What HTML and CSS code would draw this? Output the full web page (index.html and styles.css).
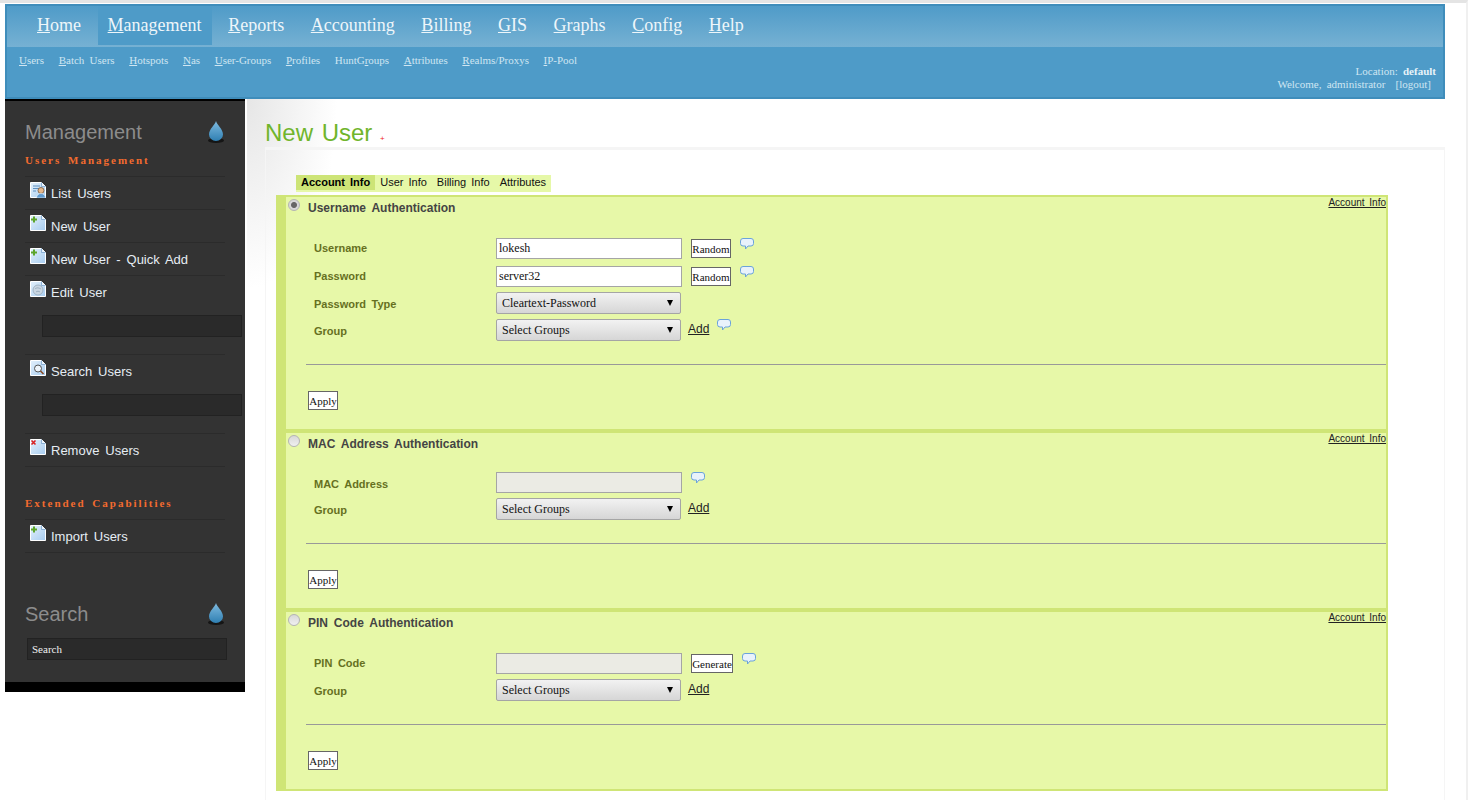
FILE: index.html
```html
<!DOCTYPE html>
<html lang="en">
<head>
<meta charset="utf-8">
<title>New User</title>
<link rel="stylesheet" href="styles.css">
</head>
<body>
<svg class="defs" width="0" height="0" aria-hidden="true">
  <defs>
    <linearGradient id="pg" x1="0" y1="0" x2="1" y2="1"><stop offset="0" stop-color="#e3f0fb"/><stop offset="1" stop-color="#a8cdf0"/></linearGradient>
    <linearGradient id="dp" x1="0" y1="0" x2="0" y2="1"><stop offset="0" stop-color="#7fbbe0"/><stop offset="1" stop-color="#2f7fb2"/></linearGradient>
    <symbol id="page" viewBox="0 0 16 16"><path d="M.5.5h11l4 4v11H.5z" fill="url(#pg)" stroke="#fff"/><path d="M11.500.5v4h4" fill="#e8f2fb" stroke="#5c8fc0" stroke-width=".6"/></symbol>
    <symbol id="bubble" viewBox="0 0 14 12"><path d="M3 .5h8a2.500 2.500 0 0 1 2.500 2.500v2.500a2.500 2.500 0 0 1-2.500 2.500H8l-2.500 3v-3H3A2.500 2.500 0 0 1 .5 5.500V3A2.500 2.500 0 0 1 3 .5z" fill="#e9f2fb" stroke="#6ba3da"/></symbol>
    <symbol id="drop" viewBox="0 0 16 22"><ellipse cx="8" cy="19.500" rx="8" ry="2.500" fill="#151515"/><path d="M8 0c1 4 7 8 7 13.500a7 6.500 0 0 1-14 0C1 8 7 4 8 0z" fill="url(#dp)"/></symbol>
  </defs>
</svg>
<div class="page">
  <header class="top">
    <nav class="mainnav">
      <a href="#"><u>H</u>ome</a>
      <a href="#" class="on"><u>M</u>anagement</a>
      <a href="#"><u>R</u>eports</a>
      <a href="#"><u>A</u>ccounting</a>
      <a href="#"><u>B</u>illing</a>
      <a href="#"><u>G</u>IS</a>
      <a href="#"><u>G</u>raphs</a>
      <a href="#"><u>C</u>onfig</a>
      <a href="#"><u>H</u>elp</a>
    </nav>
    <div class="subbar">
      <nav class="subnav">
        <a href="#"><u>U</u>sers</a>
        <a href="#"><u>B</u>atch Users</a>
        <a href="#"><u>H</u>otspots</a>
        <a href="#"><u>N</u>as</a>
        <a href="#"><u>U</u>ser-Groups</a>
        <a href="#"><u>P</u>rofiles</a>
        <a href="#">HuntG<u>r</u>oups</a>
        <a href="#"><u>A</u>ttributes</a>
        <a href="#"><u>R</u>ealms/Proxys</a>
        <a href="#"><u>I</u>P-Pool</a>
      </nav>
      <div class="status">
        <div>Location: <b>default</b></div>
        <div class="welcome">Welcome, administrator <span class="logout">[logout]</span></div>
      </div>
    </div>
  </header>
  <div class="body">
    <aside class="side">
      <h2 class="side-title">Management <svg class="drop"><use href="#drop"/></svg></h2>
      <h3 class="side-sub">Users Management</h3>
      <ul class="side-list">
        <li><a href="#">
          <svg class="ico" viewBox="0 0 16 16"><use href="#page"/><path d="M3 4h7M3 6.500h6M3 9h3" stroke="#5c8fc0"/><circle cx="11" cy="8.500" r="3" fill="#e6b88c" stroke="#6b4a2e" stroke-width=".7"/><path d="M6.500 16c0-3 2-4.500 4.500-4.500s4.500 1.500 4.500 4.500z" fill="#5f9bd0" stroke="#fff" stroke-width=".6"/></svg>
          List Users</a></li>
        <li><a href="#">
          <svg class="ico" viewBox="0 0 16 16"><use href="#page"/><path d="M1 4.500h6M4 1.500v6" stroke="#5da52a" stroke-width="2"/></svg>
          New User</a></li>
        <li><a href="#">
          <svg class="ico" viewBox="0 0 16 16"><use href="#page"/><path d="M1 4.500h6M4 1.500v6" stroke="#5da52a" stroke-width="2"/></svg>
          New User - Quick Add</a></li>
        <li><a href="#">
          <svg class="ico" viewBox="0 0 16 16"><use href="#page"/><circle cx="8" cy="9" r="5" fill="#c9d6e2" stroke="#8fa3b5" stroke-width=".7"/><path d="M5 8c2-2 4-1 6 0M6 11c1-1 3-1 4 0" stroke="#8fa3b5" fill="none" stroke-width=".8"/></svg>
          Edit User</a><input class="side-input" type="text"></li>
        <li><a href="#">
          <svg class="ico" viewBox="0 0 16 16"><use href="#page"/><circle cx="8" cy="8.500" r="3.500" fill="#eef5fb" stroke="#555"/><path d="M10.500 11l3 3" stroke="#8a4a22" stroke-width="1.600"/></svg>
          Search Users</a><input class="side-input" type="text"></li>
        <li><a href="#">
          <svg class="ico" viewBox="0 0 16 16"><use href="#page"/><path d="M1.500 1.500l4 4M5.500 1.500l-4 4" stroke="#d92020" stroke-width="1.600"/></svg>
          Remove Users</a></li>
      </ul>
      <h3 class="side-sub side-sub-next">Extended Capabilities</h3>
      <ul class="side-list">
        <li><a href="#">
          <svg class="ico" viewBox="0 0 16 16"><use href="#page"/><path d="M1 4.500h6M4 1.500v6" stroke="#5da52a" stroke-width="2"/></svg>
          Import Users</a></li>
      </ul>
      <h2 class="side-title side-title-next">Search <svg class="drop"><use href="#drop"/></svg></h2>
      <input class="side-search" type="text" value="Search">
    </aside>
    <main class="content">
      <h1 class="title">New User <span class="plus">+</span></h1>
      <div class="card">
        <div class="tabs">
          <a href="#" class="tab tab-on">Account Info</a>
          <a href="#" class="tab">User Info</a>
          <a href="#" class="tab">Billing Info</a>
          <a href="#" class="tab">Attributes</a>
        </div>

        <section class="panel">
          <div class="head">
            <input class="radio" type="radio" name="auth" checked>
            <span class="head-title">Username Authentication</span>
            <a href="#" class="toplink">Account Info</a>
          </div>
          <div class="fields">
            <label class="lab">Username</label>
            <div class="ctl"><input class="txt" type="text" value="lokesh"><button class="btn">Random</button><svg class="tip"><use href="#bubble"/></svg></div>
            <label class="lab row-gap">Password</label>
            <div class="ctl row-gap"><input class="txt" type="text" value="server32"><button class="btn">Random</button><svg class="tip"><use href="#bubble"/></svg></div>
            <label class="lab lab-sel">Password Type</label>
            <div class="ctl"><span class="selwrap"><select class="sel"><option>Cleartext-Password</option></select></span></div>
            <label class="lab lab-sel">Group</label>
            <div class="ctl"><span class="selwrap"><select class="sel"><option>Select Groups</option></select></span><a href="#" class="add">Add</a><svg class="tip tip-add"><use href="#bubble"/></svg></div>
          </div>
          <hr class="rule">
          <button class="btn btn-apply">Apply</button>
        </section>

        <section class="panel panel-mac">
          <div class="head">
            <input class="radio" type="radio" name="auth">
            <span class="head-title">MAC Address Authentication</span>
            <a href="#" class="toplink">Account Info</a>
          </div>
          <div class="fields">
            <label class="lab lab-sel">MAC Address</label>
            <div class="ctl"><input class="txt" type="text" disabled><svg class="tip"><use href="#bubble"/></svg></div>
            <label class="lab lab-sel">Group</label>
            <div class="ctl"><span class="selwrap"><select class="sel"><option>Select Groups</option></select></span><a href="#" class="add">Add</a></div>
          </div>
          <hr class="rule">
          <button class="btn btn-apply">Apply</button>
        </section>

        <section class="panel">
          <div class="head">
            <input class="radio" type="radio" name="auth">
            <span class="head-title">PIN Code Authentication</span>
            <a href="#" class="toplink">Account Info</a>
          </div>
          <div class="fields">
            <label class="lab">PIN Code</label>
            <div class="ctl"><input class="txt" type="text" disabled><button class="btn btn-gen">Generate</button><svg class="tip"><use href="#bubble"/></svg></div>
            <label class="lab lab-sel">Group</label>
            <div class="ctl"><span class="selwrap"><select class="sel"><option>Select Groups</option></select></span><a href="#" class="add">Add</a></div>
          </div>
          <hr class="rule">
          <button class="btn btn-apply">Apply</button>
        </section>
      </div>
    </main>
  </div>
</div>
</body>
</html>
```
FILE: styles.css
```css
* { box-sizing: border-box; }
html, body { margin: 0; padding: 0; background: #fff; }
body { font-family: "Liberation Sans", Arial, sans-serif; word-spacing: 2.500px; color: #222; }
.defs { display: block; }
.page { height: 800px; overflow: hidden; border-top: 3px solid #e4e4e4; border-right: 2px solid #f0f0f0; padding: 1px 0 0 5px; }

/* header */
.top { width: 1440px; height: 95px; border: 2px solid #3f8dbb; background: #4e9bc8; }
.mainnav { height: 41px; display: flex; padding-left: 20px; background: linear-gradient(#4f9bc8, #76b1d3); }
.mainnav a { height: 39px; padding: 0 10px; margin-right: 6.600px; font: 18px/39px "Liberation Serif", serif; color: #eef6fa; text-decoration: none; }
.mainnav a.on { background: #4e9bc8; }
.subbar { height: 50px; }
.subnav { display: flex; gap: 14.600px; padding: 6px 0 0 12px; height: 18px; }
.subnav a, .status { font: 11px/14px "Liberation Serif", serif; color: #cfe6f2; text-decoration: none; }
.status { padding-right: 7px; text-align: right; line-height: 13px; }
.welcome { padding-right: 5px; }
.logout { margin-left: 5px; }
.status b { color: #e8f3f9; }

/* layout */
.body { display: flex; align-items: flex-start; }

/* sidebar */
.side { width: 240px; height: 593px; flex: none; padding: 19px 20px 0; background: #333; border-top: 2px solid #000; border-bottom: 10px solid #000; }
.side-title { margin: 0; display: flex; justify-content: space-between; font: 20px/24px "Liberation Sans", sans-serif; color: #8c8c8c; word-spacing: 0; }
.side-title-next { margin-top: 49px; }
.drop { width: 16px; height: 22px; margin: 1px 1px 0 0; }
.side-sub { margin: 9px 0; font: bold 11px/14px "Liberation Serif", serif; letter-spacing: 2px; word-spacing: 2px; color: #f26b2f; }
.side-sub-next { margin-top: 29px; }
.side-list { list-style: none; margin: 0; padding: 0; border-top: 1px solid #2b2b2b; }
.side-list li { border-bottom: 1px solid #2b2b2b; }
.side-list a { display: flex; height: 32px; padding-left: 5px; gap: 5px; font-size: 13px; line-height: 34px; word-spacing: 2.300px; color: #e6edf4; text-decoration: none; }
.ico { width: 16px; height: 16px; margin-top: 5px; flex: none; }
.side-input { display: block; width: 200px; height: 22px; margin: 7px 0 17px 17px; background: #2a2a2a; border: 1px solid #222; }
.side-search { display: block; width: 200px; height: 22px; margin: 12px 0 0 2px; padding: 0 4px; background: #2a2a2a; border: 1px solid #222; color: #f0f0f0; font: 11px "Liberation Serif", serif; }

/* content */
.content { width: 1198px; height: 698px; margin-left: 2px; padding: 20px 0 0 18px; background: radial-gradient(ellipse 90px 190px at 0 0, #e6e6e6, #fff); }
.title { margin: 0; height: 28px; font: normal 24px/28px "Liberation Sans", sans-serif; word-spacing: 2px; color: #70b52c; }
.plus { font-size: 8px; line-height: 0; color: #f02020; margin-left: -1px; }
.card { width: 1180px; height: 660px; border: solid #f5f5f5; border-width: 3px 1px 0; padding: 25px 0 0 10px; }
.tabs { display: flex; width: 255px; height: 17px; margin: 0 0 3px 20px; background: #e6f8a8; align-items: flex-start; }
.tab { flex: none; white-space: nowrap; height: 15px; padding: 0 5px; font-size: 11px; line-height: 14px; word-spacing: 2px; color: #111; text-decoration: none; }
.tab-on { background: #cde477; font-weight: bold; color: #000; }

.panel { width: 1112px; padding-bottom: 19px; background: #e7f8a8; border: solid #cfe576; border-width: 2px 2px 2px 10px; }
.head { display: flex; height: 20px; }
.radio { appearance: none; width: 12px; height: 12px; margin: 2px 8px 0 2px; border-radius: 50%; border: 1px solid #b4b4b4; background: linear-gradient(#d8d8d8, #f0f0f0); flex: none; }
.radio:checked { background: radial-gradient(circle, #666 0 2.500px, #d8d8d8 3.500px); }
.head-title { font-size: 12px; font-weight: bold; line-height: 22px; color: #444; }
.toplink { margin-left: auto; font-size: 10px; line-height: 11px; word-spacing: 2px; color: #222; }

.fields { display: grid; grid-template-columns: 182px 1fr; row-gap: 5px; margin: 21px 0 0 28px; }
.panel-mac .fields { margin-top: 19px; }
.row-gap { margin-top: 2px; }
.lab { font-size: 11px; font-weight: bold; color: #66701f; line-height: 21px; }
.lab-sel { height: 21px; padding-top: 2px; line-height: 20px; }
.ctl { display: flex; align-items: flex-start; min-height: 21px; }
.txt { width: 186px; height: 21px; padding: 0 2px; border: 1px solid #a5a5a5; background: #fff; font: 12px "Liberation Serif", serif; color: #111; }
.txt:disabled { background: #ebebe4; }
.btn { height: 19px; margin: 1px 0 0 9px; padding: 1px 0 0; width: 40px; border: 1px solid #666; background: #fff; font: 11px/16px "Liberation Serif", serif; color: #111; }
.btn-gen { width: 42px; }
.tip { width: 14px; height: 12px; margin-left: 9px; flex: none; }
.tip-add { margin-left: 8px; }
.selwrap { position: relative; display: block; width: 185px; height: 22px; }
.selwrap::after { content: ""; position: absolute; right: 8px; top: 8px; border: solid transparent; border-width: 6px 3px 0; border-top-color: #000; }
.sel { appearance: none; display: block; width: 185px; height: 22px; padding: 0 5px; border: 1px solid #a5a5a5; border-radius: 2px; background: linear-gradient(#f2f2f2, #d6d6d6); font: 12px "Liberation Serif", serif; color: #111; }
.add { margin: 3px 0 0 7px; font-size: 12px; line-height: 14px; color: #222; }
.rule { margin: 23px 0 26px 20px; height: 1px; border: 0; background: #999; }
.btn-apply { display: block; width: 30px; margin: 0 0 0 22px; }
```
